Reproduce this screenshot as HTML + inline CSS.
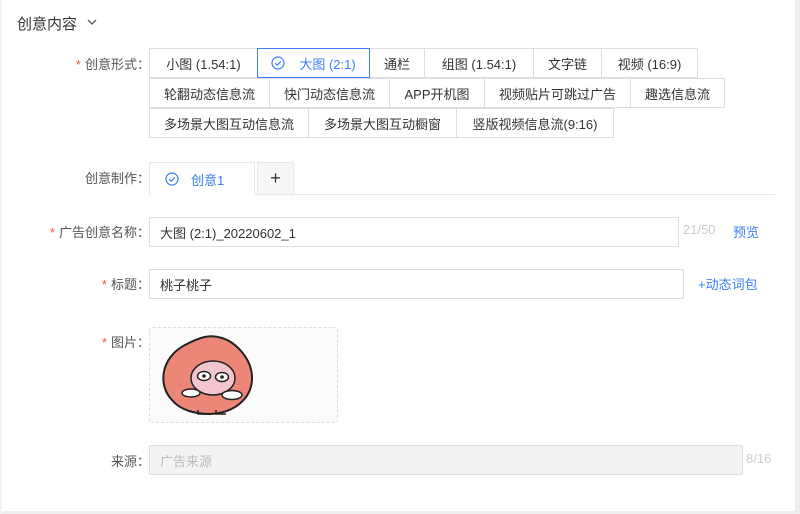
<!DOCTYPE html><html><head><meta charset="utf-8"><style>
*{box-sizing:border-box;margin:0;padding:0}
body{width:800px;height:514px;background:#fff;font-family:"Liberation Sans","Noto Sans CJK SC",sans-serif;font-size:13px;color:#333;position:relative;overflow:hidden}
.a{position:absolute}
.lbl{position:absolute;right:650px;color:#555;white-space:nowrap}
.lbl b{color:#f5504b;font-weight:normal;margin-right:4px}
.btn{position:absolute;height:30px;border:1px solid #ddd;display:flex;align-items:center;justify-content:center;color:#333;background:#fff;white-space:nowrap}
.inp{position:absolute;border:1px solid #ddd;border-radius:2px;height:30px;padding-left:10px;display:flex;align-items:center}
.blue{color:#3a7ff0}
</style></head><body>
<div class="a" style="right:0;top:0;width:5px;height:514px;background:#eee"></div>
<div class="a" style="left:0;bottom:0;width:800px;height:3px;background:#eee"></div>
<div class="a" style="left:0;top:0;width:2px;height:514px;background:#f3f3f3"></div>
<div class="a" style="left:17px;top:13px;font-size:15px;color:#333">创意内容</div>
<svg class="a" style="left:87px;top:17px" width="10" height="10" viewBox="0 0 10 10"><path d="M1 3l4 4 4-4" fill="none" stroke="#555" stroke-width="1.3"/></svg>

<div class="lbl" style="top:54px"><b>*</b>创意形式：</div>
<div class="btn" style="left:149px;top:48px;width:109px">小图 (1.54:1)</div>
<div class="btn" style="left:257px;top:48px;width:113px;border-color:#3a7ff0;color:#3a7ff0;z-index:2"><svg width="14" height="14" viewBox="0 0 14 14" style="margin-right:14px"><circle cx="7" cy="7" r="6" fill="none" stroke="#3a7ff0" stroke-width="1.2"/><path d="M4.3 7.2l2 2 3.5-3.7" fill="none" stroke="#3a7ff0" stroke-width="1.2"/></svg>大图 (2:1)</div>
<div class="btn" style="left:369px;top:48px;width:56px">通栏</div>
<div class="btn" style="left:424px;top:48px;width:110px">组图 (1.54:1)</div>
<div class="btn" style="left:533px;top:48px;width:69px">文字链</div>
<div class="btn" style="left:601px;top:48px;width:97px">视频 (16:9)</div>
<div class="btn" style="left:149px;top:78px;width:121px">轮翻动态信息流</div>
<div class="btn" style="left:269px;top:78px;width:121px">快门动态信息流</div>
<div class="btn" style="left:389px;top:78px;width:96px">APP开机图</div>
<div class="btn" style="left:484px;top:78px;width:147px">视频贴片可跳过广告</div>
<div class="btn" style="left:630px;top:78px;width:95px">趣选信息流</div>
<div class="btn" style="left:149px;top:108px;width:160px">多场景大图互动信息流</div>
<div class="btn" style="left:308px;top:108px;width:149px">多场景大图互动橱窗</div>
<div class="btn" style="left:456px;top:108px;width:158px">竖版视频信息流(9:16)</div>

<div class="lbl" style="top:168px">创意制作：</div>
<div class="a" style="left:149px;top:194px;width:626px;height:1px;background:#e8e8e8"></div>
<div class="a blue" style="left:149px;top:162px;width:106px;height:33px;border:1px solid #e8e8e8;border-bottom:none;background:#fff;display:flex;align-items:center;padding-left:15px"><svg width="14" height="14" viewBox="0 0 14 14" style="margin-right:12px"><circle cx="7" cy="7" r="6" fill="none" stroke="#3a7ff0" stroke-width="1.2"/><path d="M4.3 7.2l2 2 3.5-3.7" fill="none" stroke="#3a7ff0" stroke-width="1.2"/></svg>创意1</div>
<div class="a" style="left:257px;top:162px;width:37px;height:32px;border:1px solid #e8e8e8;border-bottom:none;background:#f7f7f7;display:flex;align-items:center;justify-content:center;font-size:18px;color:#333">+</div>

<div class="lbl" style="top:222px"><b>*</b>广告创意名称：</div>
<div class="inp" style="left:149px;top:217px;width:530px">大图 (2:1)_20220602_1</div>
<div class="a" style="left:683px;top:222px;color:#ccc">21/50</div>
<div class="a blue" style="left:733px;top:222px">预览</div>

<div class="lbl" style="top:274px"><b>*</b>标题：</div>
<div class="inp" style="left:149px;top:269px;width:535px">桃子桃子</div>
<div class="a blue" style="left:698px;top:274px">+动态词包</div>

<div class="lbl" style="top:332px"><b>*</b>图片：</div>
<div class="a" style="left:149px;top:327px;width:189px;height:96px;border:1px dashed #ddd;border-radius:4px;background:#fafbfa;overflow:hidden">
<svg width="189" height="96" viewBox="0 0 189 96">
<path d="M22 72 C8 58 10 30 35 17 C50 9 60 6 72 10 C85 14 102 30 102 50 C102 70 85 85 60 86 C45 86 30 82 22 72Z" fill="#ec8677" stroke="#222" stroke-width="2"/>
<ellipse cx="63" cy="50" rx="22" ry="17" fill="#f3c6cf" stroke="#222" stroke-width="1.5"/>
<ellipse cx="54" cy="48" rx="6.5" ry="4.5" fill="#fff" stroke="#222" stroke-width="1.5"/><circle cx="54" cy="48" r="1.8" fill="#222"/>
<ellipse cx="72" cy="49" rx="6.5" ry="4.5" fill="#fff" stroke="#222" stroke-width="1.5"/><circle cx="72" cy="49" r="1.8" fill="#222"/>
<ellipse cx="41" cy="65" rx="9" ry="4" fill="#fff" stroke="#222" stroke-width="1.5"/>
<ellipse cx="82" cy="67" rx="10" ry="4.5" fill="#fff" stroke="#222" stroke-width="1.5"/>
<path d="M48 82 v4 h10 M66 82 v4 h10" fill="none" stroke="#222" stroke-width="1.5"/>
</svg></div>

<div class="lbl" style="top:451px">来源：</div>
<div class="inp" style="left:149px;top:445px;width:594px;background:#f3f3f3;color:#bbb">广告来源</div>
<div class="a" style="left:746px;top:451px;color:#ccc">8/16</div>
</body></html>
